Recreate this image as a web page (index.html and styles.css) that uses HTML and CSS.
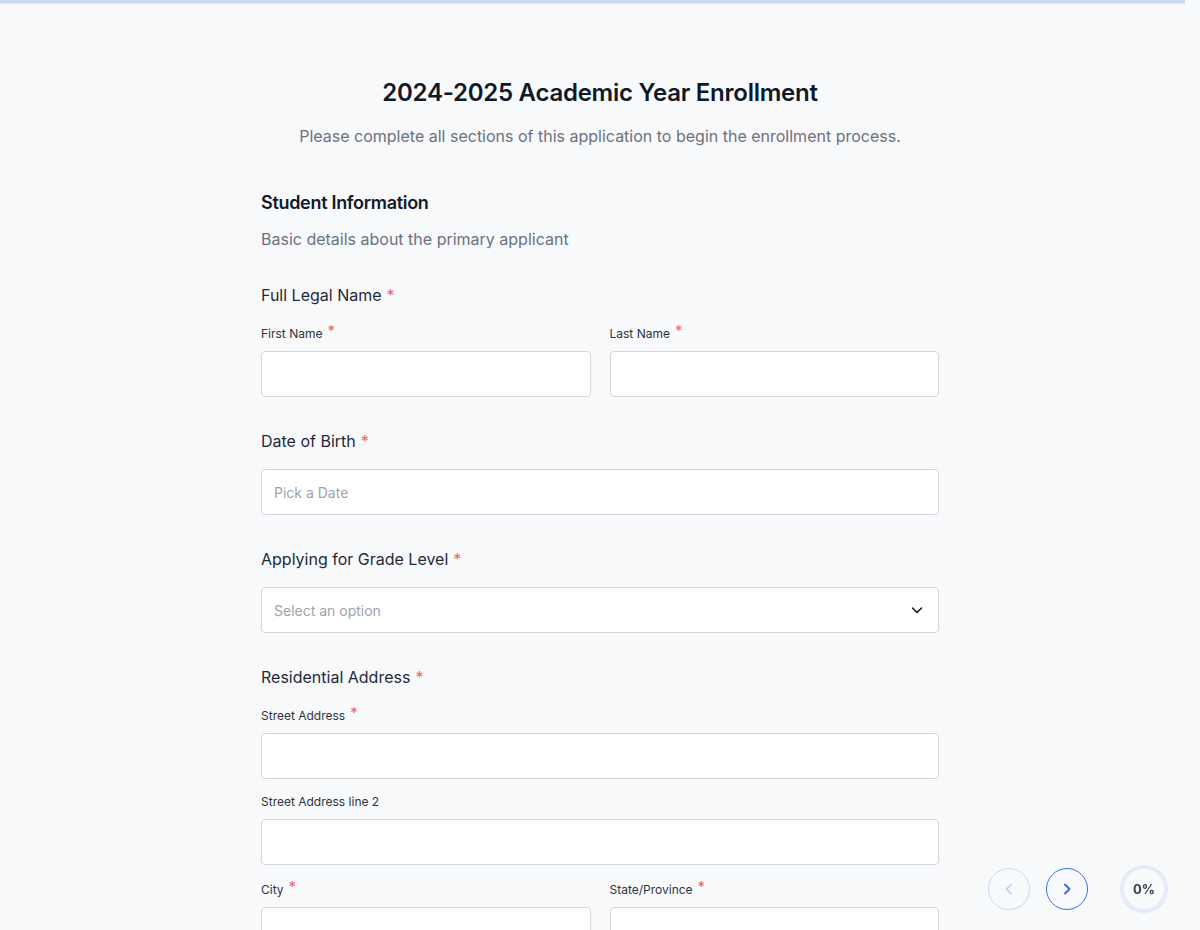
FILE: index.html
```html
<!DOCTYPE html>
<html lang="en">
<head>
<meta charset="utf-8">
<title>2024-2025 Academic Year Enrollment</title>
<link rel="stylesheet" href="styles.css">
</head>
<body>
<div class="topbar"></div>
<main class="page">
  <header class="intro">
    <h1 class="title">2024-2025 Academic Year Enrollment</h1>
    <p class="subtitle">Please complete all sections of this application to begin the enrollment process.</p>
  </header>

  <section class="section">
    <h2 class="section-title">Student Information</h2>
    <p class="section-desc">Basic details about the primary applicant</p>

    <div class="group">
      <div class="label">Full Legal Name<span class="req">*</span></div>
      <div class="row two">
        <div class="field">
          <label class="sublabel">First Name<span class="req">*</span></label>
          <input class="input" type="text">
        </div>
        <div class="field">
          <label class="sublabel">Last Name<span class="req">*</span></label>
          <input class="input" type="text">
        </div>
      </div>
    </div>

    <div class="group">
      <div class="label">Date of Birth<span class="req">*</span></div>
      <input class="input" type="text" placeholder="Pick a Date">
    </div>

    <div class="group">
      <div class="label">Applying for Grade Level<span class="req">*</span></div>
      <div class="select">
        <span class="placeholder">Select an option</span>
        <svg class="chev" width="16" height="16" viewBox="0 0 16 16" fill="none"><path d="M3.5 6 8 10.5 12.5 6" stroke="#111827" stroke-width="1.6" stroke-linecap="round" stroke-linejoin="round"/></svg>
      </div>
    </div>

    <div class="group">
      <div class="label">Residential Address<span class="req">*</span></div>
      <div class="field">
        <label class="sublabel">Street Address<span class="req">*</span></label>
        <input class="input" type="text">
      </div>
      <div class="field mt12">
        <label class="sublabel">Street Address line 2</label>
        <input class="input" type="text">
      </div>
      <div class="row two mt14">
        <div class="field">
          <label class="sublabel">City<span class="req">*</span></label>
          <input class="input" type="text">
        </div>
        <div class="field">
          <label class="sublabel">State/Province<span class="req">*</span></label>
          <input class="input" type="text">
        </div>
      </div>
    </div>
  </section>
</main>

<nav class="pager">
  <button class="nav-btn prev" aria-label="Previous">
    <svg width="16" height="16" viewBox="0 0 16 16" fill="none"><path d="M10 3.5 5.5 8 10 12.5" stroke="#b9cdf5" stroke-width="1.6" stroke-linecap="round" stroke-linejoin="round"/></svg>
  </button>
  <button class="nav-btn next" aria-label="Next">
    <svg width="16" height="16" viewBox="0 0 16 16" fill="none"><path d="M6 3.5 10.5 8 6 12.5" stroke="#2f66e0" stroke-width="1.8" stroke-linecap="round" stroke-linejoin="round"/></svg>
  </button>
  <div class="progress">0%</div>
</nav>
</body>
</html>
```

FILE: styles.css
```css
* { box-sizing: border-box; }

html, body {
  margin: 0;
  padding: 0;
}

body {
  background: #f8f9fb;
  font-family: Inter, "Noto Sans", "Liberation Sans", sans-serif;
  color: #1f2937;
  height: 930px;
  overflow: hidden;
}

.topbar {
  position: fixed;
  top: 0;
  left: 0;
  right: 15px;
  height: 4px;
  background: #cbd9f6;
  border-bottom: 1px solid #e2e9f9;
}

.page {
  width: 678px;
  margin: 0 auto;
  padding-top: 77px;
}

.intro {
  text-align: center;
}

.title {
  margin: 0;
  font-size: 24px;
  line-height: 32px;
  font-weight: 600;
  color: #111827;
  letter-spacing: -0.25px;
}

.subtitle {
  margin: 15px 0 0;
  font-size: 16px;
  line-height: 24px;
  color: #6b7280;
}

.section {
  margin-top: 41px;
}

.section-title {
  margin: 0;
  font-size: 18px;
  line-height: 28px;
  font-weight: 600;
  color: #111827;
  letter-spacing: -0.3px;
}

.section-desc {
  margin: 10px 0 0;
  font-size: 16px;
  line-height: 24px;
  color: #6b7280;
}

.group {
  margin-top: 32px;
  display: flex;
  flex-direction: column;
}

.label {
  font-size: 16px;
  line-height: 24px;
  height: 24px;
  font-weight: 400;
  color: #1f2937;
  margin-bottom: 16px;
}

.req {
  color: #f26464;
  margin-left: 5px;
}

.row.two {
  display: grid;
  grid-template-columns: 1fr 1fr;
  column-gap: 19px;
}

.field {
  display: flex;
  flex-direction: column;
}

.mt12 { margin-top: 12px; }
.mt14 { margin-top: 14px; }

.sublabel {
  display: block;
  height: 21px;
  font-size: 12px;
  line-height: 21px;
  font-weight: 400;
  color: #2d3440;
  margin-bottom: 7px;
}

.sublabel .req {
  font-size: 15px;
  line-height: 1;
  position: relative;
  top: -2px;
  margin-left: 5px;
}

.input {
  display: block;
  width: 100%;
  height: 46px;
  border: 1px solid #d4d7dd;
  border-radius: 4px;
  background: #fff;
  padding: 0 12px;
  font-family: inherit;
  font-size: 14px;
  color: #111827;
  outline: none;
}

.input::placeholder {
  color: #9ca3af;
}

.select {
  height: 46px;
  border: 1px solid #d4d7dd;
  border-radius: 4px;
  background: #fff;
  padding: 0 13px 0 12px;
  display: flex;
  align-items: center;
  justify-content: space-between;
}

.placeholder {
  font-size: 14px;
  color: #9ca3af;
}

.pager {
  position: fixed;
  right: 32px;
  bottom: 17px;
  display: flex;
  align-items: center;
}

.nav-btn {
  width: 42px;
  height: 42px;
  border-radius: 50%;
  background: transparent;
  padding: 0;
  display: flex;
  align-items: center;
  justify-content: center;
  cursor: pointer;
}

.nav-btn.prev {
  border: 1.5px solid #c9d8f6;
}

.nav-btn.next {
  margin-left: 16px;
  border: 1.5px solid #3c70e2;
}

.progress {
  margin-left: 32px;
  width: 48px;
  height: 48px;
  border-radius: 50%;
  border: 4px solid #e4ebf9;
  display: flex;
  align-items: center;
  justify-content: center;
  font-size: 13px;
  font-weight: 700;
  color: #374151;
}
```
